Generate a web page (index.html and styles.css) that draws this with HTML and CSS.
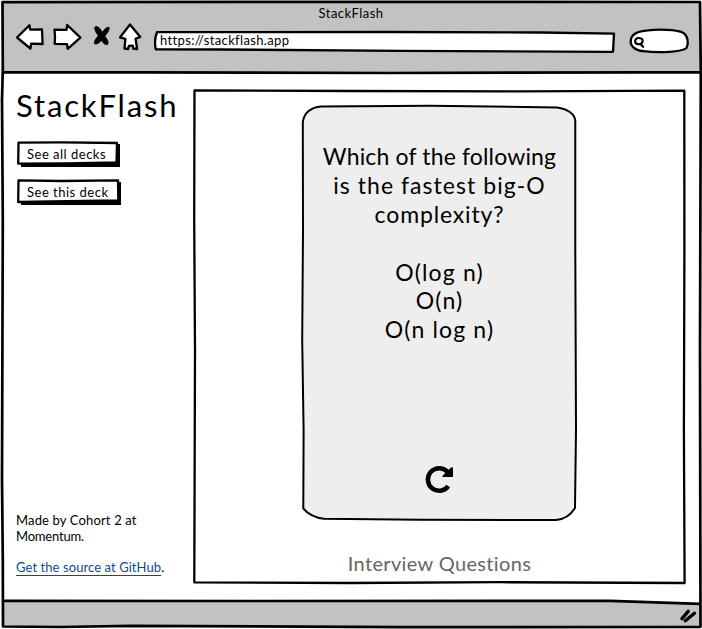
FILE: index.html
```html
<!DOCTYPE html>
<html lang="en">
<head>
<meta charset="utf-8">
<title>StackFlash</title>
<link rel="stylesheet" href="styles.css">
</head>
<body>
<div class="window">
  <svg class="sketch" viewBox="0 0 702 629">
    <path class="chrome" d="M2.5 2.2L701 2L700.8 72.2L400 73L140 72.5L3 72.3Z"/>
    <path class="chrome" d="M3 600.8L250 601L610 600.8L700 603.8L700.5 626.7L400 627L130 625.8L3 626.3Z"/>
    <path class="line thick" d="M2.5 2.2L350 1.8L700 2L700.8 72L700 350L700.5 626.8L400 627.2L130 625.8L60 627L3 626.5L2.8 560L2 480L2.8 220L2 100L2.8 70Z"/>
    <path class="line thick" d="M3 72.3L140 72.3L390 73L640 72.3L700 72.3M3 600.8L250 601L610 600.8L700 603.8"/>
  </svg>

  <header class="browser-bar">
    <div class="window-title">StackFlash</div>
    <div class="toolbar">
      <svg class="nav-icons" width="128" height="32" viewBox="14 22 128 32">
        <path class="icon" d="M17 37.5L29.4 25.3L30.2 29.6L42 29.3L42.6 44L31.2 43.7L30.4 48.5Z"/>
        <path class="icon" d="M54.5 29.7L66.5 29.8L67.2 25L80.4 37.6L67.7 48.9L67 44.2L54.7 43.8L55 37Z"/>
        <path class="stop" d="M95 27C97.5 25.5 100.5 28.5 102.3 32.5C104.5 29 107 26.5 109.2 27.6C109.4 30.5 107 33.5 104.8 36.3C107 39 109 42 107.6 44.4C105 45.3 102.8 42.5 101.5 40.5C99 43 96.5 44.8 94.4 43.6C94 40.5 96.5 38 98.3 35.8C96.5 33 94 29.5 95 27Z"/>
        <path class="icon" d="M130 24.5L140.3 36.9L135.6 38.8L137.1 49L133.2 48.5L132.8 45.7L128.9 45.8L128.2 49L124.5 48.5L125.4 38.9L120 37.4Z"/>
      </svg>
      <div class="address">
        <svg class="sketch" viewBox="153 30 462 23"><path class="icon" d="M156 32.2L390 32L540 32.5L613 33.6L612 51.8L400 50.8L220 49.5L154.8 49.3C153.6 44 154 37 156 32.2Z"/></svg>
        <span>https://stackflash.app</span>
      </div>
      <svg class="search" width="62" height="27" viewBox="628 27 62 27">
        <path class="icon" d="M648 30.3C660 29 676 30 682 32.2C688 35 689 43 686.5 48C682 52 660 53 643 51.2C635 50.4 630 46 630.8 40.5C631 34 639 31 648 30.3Z"/>
        <path class="lens" d="M638.6 38C642.6 38 643.3 40 642.2 42.6C641 44.8 635.4 45 635.1 41.7C635 39.6 636.4 38 638.6 38ZM640.4 43.8L643 46.8"/>
      </svg>
    </div>
  </header>

  <main class="content">
    <aside class="sidebar">
      <h1>StackFlash</h1>
      <nav class="deck-links">
        <button class="sketch-button all">
          <svg class="sketch" viewBox="0 0 104 27"><path class="shadow" d="M4 4L103 3L103 26L4 26Z"/><path class="icon" d="M1.5 1.7L45 1.3L100 2L99.5 21.5L50 22.3L1.2 22.6Z"/></svg>
          <span>See all decks</span>
        </button>
        <button class="sketch-button this">
          <svg class="sketch" viewBox="0 0 104 27"><path class="shadow" d="M4 4L104 3L104 26L4 26Z"/><path class="icon" d="M1.5 1.4L45 2L101 1.3L101.3 21.5L50 22.1L1.2 23Z"/></svg>
          <span>See this deck</span>
        </button>
      </nav>
      <div class="credits">
        <p><span class="made">Made by Cohort 2 at</span><br><span class="momentum">Momentum.</span></p>
        <p class="source"><a href="#">Get the source at GitHub</a>.</p>
      </div>
    </aside>

    <section class="deck">
      <svg class="sketch" viewBox="193 89 494 497"><path class="line frame" d="M194.5 90.3L350 91L520 91.3L684.3 90.7L684.4 250L683.9 430L684.6 583L500 582.2L350 583L194.3 582.3L195 350L194.2 220Z"/></svg>
      <article class="card">
        <svg class="sketch" viewBox="301 104 277 418"><path class="card-shape" d="M321 106.4L430 105.8L557 107.5C568 109 575 114 575.3 121L575.3 250L576 430L575 508C570 516 564 519.5 556 520L420 519.8L324 518.7C314 517.5 308 514 303.3 508.5L303.6 430L302.2 340L303 230L302.8 122C304 113 311 107 321 106.4Z"/></svg>
        <div class="question">
          <div class="q1">Which of the following</div>
          <div class="q2">is the fastest big-O</div>
          <div class="q3">complexity?</div>
        </div>
        <div class="answers">
          <div class="a1">O(log n)</div>
          <div class="a2">O(n)</div>
          <div class="a3">O(n log n)</div>
        </div>
        <svg class="flip" width="30" height="30" viewBox="424 465 30 30">
          <path class="flip-arc" d="M448.3 486.2A11.3 11.3 0 1 1 447.3 471.6"/>
          <path d="M453 467.3V477H442.4L442.8 475.4L451 467.6Z"/>
        </svg>
      </article>
      <div class="deck-name">Interview Questions</div>
    </section>
  </main>

  <footer class="status-bar">
    <svg width="18" height="15" viewBox="679 609 18 15"><path class="grip" d="M682 618.7L688.2 611.4M685.3 620.8L694.5 613.3"/></svg>
  </footer>
</div>
</body>
</html>
```

FILE: styles.css
```css
* {
  box-sizing: border-box;
}

body {
  margin: 0;
  background: #fff;
  color: #000;
  font-family: Lato, "Open Sans", sans-serif;
  font-size: 13px;
  font-variant-ligatures: none;
}

svg {
  display: block;
}

.window {
  position: relative;
  display: flex;
  flex-direction: column;
  width: 702px;
  height: 629px;
  overflow: hidden;
}

.sketch {
  position: absolute;
  inset: 0;
  width: 100%;
  height: 100%;
}

.sketch + * {
  position: relative;
}

.chrome {
  fill: #c2c2c2;
}

.line {
  fill: none;
  stroke: #000;
  stroke-linejoin: round;
}

.thick {
  stroke-width: 2.7;
}

.frame {
  stroke-width: 2.3;
}

.icon {
  fill: #fff;
  stroke: #000;
  stroke-width: 2.3;
  stroke-linejoin: round;
}

.stop {
  fill: #000;
  stroke: #000;
  stroke-width: 0.9;
}

.browser-bar {
  height: 74px;
  padding-top: 5px;
}

.window-title {
  height: 17px;
  line-height: 16px;
  text-align: center;
  letter-spacing: 0.45px;
}

.toolbar {
  display: flex;
  padding-left: 14px;
}

.address {
  position: relative;
  width: 462px;
  height: 23px;
  margin: 8px 12px 0 12px;
  padding-left: 6px;
  line-height: 20px;
  letter-spacing: 0.35px;
}

.search {
  margin-top: 5px;
}

.lens {
  fill: none;
  stroke: #000;
  stroke-width: 2.2;
  stroke-linecap: round;
}

.content {
  display: flex;
  height: 527px;
  padding-top: 15px;
}

.sidebar {
  display: flex;
  flex-direction: column;
  width: 193px;
  height: 497px;
  padding-left: 16px;
}

h1 {
  height: 36px;
  margin: 0;
  font-size: 31px;
  font-weight: 400;
  line-height: 32px;
  letter-spacing: 1.85px;
}

.deck-links {
  display: flex;
  flex-direction: column;
  gap: 11px;
  padding: 16px 0 0 1px;
}

.sketch-button {
  position: relative;
  width: 104px;
  height: 27px;
  padding: 0 0 1px 10px;
  border: 0;
  background: none;
  color: #000;
  font: inherit;
  text-align: left;
  letter-spacing: 0.5px;
}

.credits {
  margin-top: auto;
  line-height: 16px;
  letter-spacing: 0.15px;
}

.momentum {
  letter-spacing: -0.2px;
}

.credits p {
  margin: 0;
}

.credits .source {
  margin: 15px 0 11px;
  letter-spacing: 0.08px;
}

.credits a {
  color: #0a4b94;
  text-decoration: underline;
  text-underline-offset: 3px;
}

.deck {
  position: relative;
  width: 494px;
  height: 497px;
  padding: 15px 0 0 108px;
}

.card {
  position: relative;
  display: flex;
  flex-direction: column;
  align-items: center;
  width: 277px;
  height: 418px;
  padding-top: 38px;
  font-size: 23px;
  line-height: 28.8px;
  text-align: center;
  white-space: nowrap;
}

.card-shape {
  fill: #eee;
  stroke: #000;
  stroke-width: 2;
}

.q1 {
  letter-spacing: 0.15px;
}

.q2 {
  letter-spacing: 1.05px;
}

.q3 {
  letter-spacing: 0.85px;
}

.answers {
  position: relative;
  margin-top: 29.3px;
  letter-spacing: 1.15px;
}

.flip {
  position: relative;
  margin: 120.7px 2px 0 0;
}

.flip-arc {
  fill: none;
  stroke: #000;
  stroke-width: 4.5;
}

.deck-name {
  width: 277px;
  margin-top: 28px;
  color: #666;
  font-size: 20px;
  line-height: 27px;
  text-align: center;
  letter-spacing: 0.35px;
}

.status-bar {
  position: relative;
  display: flex;
  justify-content: flex-end;
  padding: 8px 5px 0 0;
}

.grip {
  fill: none;
  stroke: #000;
  stroke-width: 3.4;
  stroke-linecap: round;
}

.shadow {
  fill: #000;
}
```
